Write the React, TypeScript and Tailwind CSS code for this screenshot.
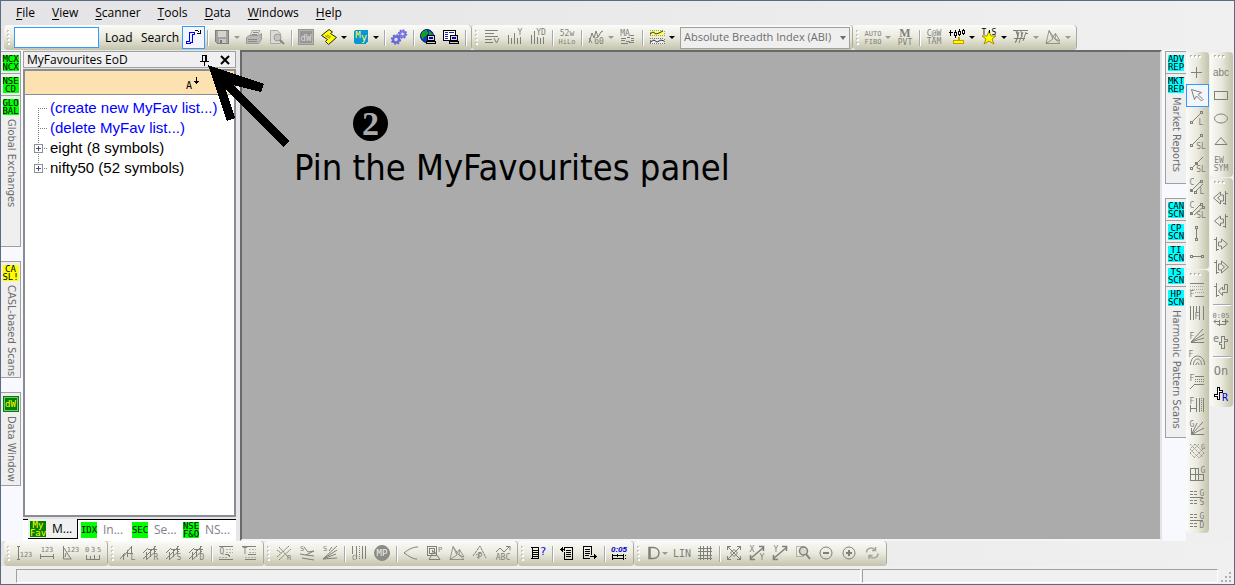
import type { ReactNode } from "react";

type TProps = { x: number; y: number; s?: number; fill?: string; children: ReactNode };

// lettering inside the tool glyphs
function T({ x, y, s = 8, fill = "currentColor", children }: TProps) {
  return (
    <text x={x} y={y} fontSize={s} fill={fill} stroke="none" textAnchor="middle" fontFamily="'DejaVu Sans Mono', monospace">
      {children}
    </text>
  );
}

const pc = (
  <>
    <path d="M7.5 6.5h7v5h-7z" fill="#dcdcdc" stroke="#000" />
    <path d="M9 8h4v2H9z" fill="#0000d0" stroke="none" />
    <path d="M6.5 12.5h9v2h-9z" fill="#c8c8c8" stroke="#000" />
  </>
);

const hatch = <path d="M0 8l5-5M0 14L13 1M3 15l10-9M3.5 7v7M7.5 4v8M11.5 1v8M5 4.5h9" shapeRendering="auto" />;

const icons: Record<string, ReactNode> = {
  follow: (
    <>
      <path d="M4.5 3.5h5v2h-2v8h-2v1h-4v-2h3z" stroke="#0000ff" fill="#e8ecff" />
      <path d="M9.5 1.5h3l2 2M15.5 1v4M12 4.5h4" stroke="#000" />
    </>
  ),
  save: (
    <>
      <path d="M1.5 1.5h13v13h-11l-2-2z" fill="#a2a2a2" />
      <path d="M4 2h8v6H4z" fill="#d4d4cc" stroke="none" />
      <path d="M5 10h7v4H5z" fill="#c8c8c0" stroke="none" />
      <path d="M6 11h2v3H6z" fill="#777" stroke="none" />
    </>
  ),
  print: (
    <g shapeRendering="auto">
      <path d="M6 1.5h8l-3 6H4z" fill="#e2e2dc" stroke="#aaa" />
      <path d="M.5 8.5l3-2h9l3-2v6l-3 4H.5z" fill="#b8b8b4" stroke="#999" />
      <path d="M7 3.5h5M6 5.5h5M2 10.5h9M2 12.5h9" stroke="#8a8a86" />
    </g>
  ),
  preview: (
    <g shapeRendering="auto">
      <path d="M1.5 1.5h7l3 3v10h-10z" fill="#dcdcd6" stroke="#aaa" />
      <circle cx="8.5" cy="8.5" r="3.5" fill="#c6c6c0" stroke="#999" />
      <path d="M11 11l4 4" stroke="#888" strokeWidth="2" />
    </g>
  ),
  dw: (
    <>
      <path d="M0 0h16v16H0z" fill="#969696" stroke="none" />
      <path d="M1.5 1.5h13v13h-13z" stroke="#b4b4ae" />
      <T x={8} y={12} s={9} fill="#dcdcd4">dW</T>
    </>
  ),
  swirl: (
    <g shapeRendering="auto">
      <path d="M8 .5L.5 6.5l6 4-2 2 3 3 8-7-6-4 2-1.500z" fill="#ffff00" stroke="#222" />
      <path d="M4 6.5l5 3M6 6l4 2" stroke="#a09000" />
    </g>
  ),
  my: (
    <>
      <path d="M2 1h13v11l-2 3H2L1 14V2z" fill="#0a96d2" stroke="none" />
      <T x={5} y={9} s={9} fill="#ffff50">M</T>
      <T x={11} y={12} s={10} fill="#ffff50">y</T>
    </>
  ),
  gears: (
    <g shapeRendering="auto">
      <circle cx="5" cy="10.5" r="3" stroke="#6a6ae0" strokeWidth="2.5" />
      <circle cx="5" cy="10.5" r="4.5" stroke="#6060c8" strokeWidth="1.5" strokeDasharray="1.8 1.7" />
      <circle cx="11.500" cy="5" r="2.5" stroke="#7c7cf0" strokeWidth="2.5" />
      <circle cx="11.500" cy="5" r="4" stroke="#6060c8" strokeWidth="1.5" strokeDasharray="1.6 1.5" />
    </g>
  ),
  globe: (
    <>
      <circle cx="7" cy="7" r="6.5" fill="#1038c8" stroke="#002060" shapeRendering="auto" />
      <path d="M3 2l4-1 1 3-3 3-3 3-1-4zM9 2l4 3v2H9z" fill="#10a020" stroke="none" />
      {pc}
    </>
  ),
  listpc: (
    <>
      <path d="M.5 1.5h12v10H.5z" fill="#fff" stroke="#000" />
      <path d="M2 3.5h3M6 3.5h5M2 5.5h3M2 7.5h3M2 9.5h3" stroke="#2020c0" />
      {pc}
    </>
  ),
  linesv: (
    <>
      <path d="M1 1.5h13M1 4.5h9M1 7.5h13M1 10.5h7M1 13.5h8" />
      <path d="M10 9l2.500 5L15 9" shapeRendering="auto" />
    </>
  ),
  barsy: (
    <>
      <path d="M1.5 15V6M4.5 15V9M7.5 15V4M10.5 15V9M13.5 15V8" />
      <T x={13} y={6}>Y</T>
    </>
  ),
  barsyd: (
    <>
      <path d="M1.5 15V6M4.5 15V2M7.5 15V8M10.5 15V9M13.5 15V8" />
      <T x={11} y={6}>YD</T>
    </>
  ),
  hilo: (
    <>
      <T x={8} y={7}>52w</T>
      <T x={8} y={15} s={7}>HiLo</T>
    </>
  ),
  zigzag60: (
    <>
      <path d="M1 14l3-10 2 5 2-7 2 6 3-5 2-1M1 9l3 5" shapeRendering="auto" />
      <T x={11} y={15}>60</T>
    </>
  ),
  ma: (
    <>
      <T x={5} y={7}>MA</T>
      <path d="M10 6.5h4M1 9.5h5M7 8.5h3M11 9.5h3M1 11.5h4M6 12.5h4M11 11.5h3M1 14.5h7M9 13.5h5" />
    </>
  ),
  chart: (
    <>
      <path d="M1 1.5h14v5H1z" fill="#ffff60" stroke="#999" strokeDasharray="1 1" />
      <path d="M1 9.5h14v5H1z" fill="#eee" stroke="#777" strokeDasharray="1 1" />
      <path d="M1 5l3-2 3 2 3-1 4-2M1 13l4-2 3 2 4-2 3 1" stroke="#333" shapeRendering="auto" />
    </>
  ),
  autofibo: (
    <>
      <T x={8} y={7} s={7}>AUTO</T>
      <T x={8} y={15} s={7}>FIBO</T>
    </>
  ),
  mpvt: (
    <>
      <text x="8" y="8" fontSize="12" fontWeight="bold" textAnchor="middle" fill="currentColor" stroke="none" fontFamily="'Liberation Serif', serif">
        M
      </text>
      <T x={8} y={16}>PVT</T>
    </>
  ),
  cowtam: (
    <>
      <T x={8} y={7}>C@W</T>
      <T x={8} y={15}>TAM</T>
    </>
  ),
  candles: (
    <>
      <path d="M1.5 1v6M0 3.5h4M6.5 1v8M10.5 0v7M14.5 0v6" stroke="#000" />
      <path d="M5.5 3.5h2v3h-2zM9.5 2.5h2v3h-2zM13.5 1.5h2v3h-2z" fill="#fff" stroke="#000" />
      <path d="M9.500 8.500h1v3h4v3h-10v-3h5z" fill="#ffff00" stroke="#c0a000" />
    </>
  ),
  tas: (
    <>
      <path d="M8 2l2 5h5l-4 3 2 5-5-3-5 3 2-5-4-3h5z" fill="#ffff00" stroke="#a09000" shapeRendering="auto" />
      <T x={3} y={6} fill="#000">T</T>
      <T x={13} y={6} fill="#000">S</T>
      <path d="M8.5 1v3" stroke="#000" />
    </>
  ),
  channels: <path d="M0 1.5h15M13 4.5h2M3 2l2 6-3 6M6 3L3 13M10 3L6 14M13 3l-3 9M1 9.5h11M4 2l1 5M8 2l1 6" shapeRendering="auto" />,
  tri: <path d="M1 14.5L4 1.500l6 8.500 5 4.500zM4 1.500L8 10l-7 4.500M10.500 4.500L15 12l-5-2zM10.500 4.500L7 9" strokeWidth=".8" shapeRendering="auto" />,

  i123: (
    <>
      <path d="M1 1.5h3M2.5 1v13M1 14.5h3" />
      <T x={10} y={12} s={7}>123</T>
    </>
  ),
  w123: (
    <>
      <T x={8} y={7} s={7}>123</T>
      <path d="M1.5 9v5M14.5 9v5M1 11.5h14" />
    </>
  ),
  v123: (
    <>
      <path d="M1.5 1v13h8M2 3l7 11M4 8l-1 4" shapeRendering="auto" />
      <T x={11} y={7} s={7}>123</T>
    </>
  ),
  ruler: (
    <>
      <T x={2} y={7} s={7}>0</T>
      <T x={8} y={7} s={7}>3</T>
      <T x={14} y={7} s={7}>5</T>
      <path d="M1.5 10v4M5.5 11v3M9.5 10v4M14.5 10v4M1 14.5h14" />
    </>
  ),
  hatchL: (
    <>
      <path d="M0 14l5-6M3.5 15V9M3 12l9-11M7.5 12V5M11.5 9V1M8 8.5h5" shapeRendering="auto" />
      <T x={13} y={15}>L</T>
    </>
  ),
  hatchR: (
    <>
      {hatch}
      <T x={13} y={15}>R</T>
    </>
  ),
  hatchS: (
    <>
      {hatch}
      <T x={13} y={15}>S</T>
    </>
  ),
  hatchD: (
    <>
      {hatch}
      <T x={13} y={15}>D</T>
    </>
  ),
  quad: (
    <>
      <T x={4} y={9}>Q</T>
      <path d="M1 1.5h14M7 9.5h3l2 2M1 14.5h14" />
      <path d="M8 4.5h7M8 7.5h7M1 12.5h9" strokeDasharray="2 1" stroke="#b0b0a8" />
    </>
  ),
  tline: (
    <>
      <T x={4} y={9}>T</T>
      <path d="M1 1.5h14M7 9.5h8M4 14.5h11" />
      <path d="M8 4.5h7M8 7.5h7M4 12.5h11" strokeDasharray="2 1" stroke="#b0b0a8" />
    </>
  ),
  crossA: (
    <>
      <path d="M1 12L13 1M3 15L15 4M3 2l9 10M1 5l4 3" strokeDasharray="2 .5" shapeRendering="auto" />
      <T x={13} y={15} s={7}>R</T>
    </>
  ),
  fanS1: (
    <>
      <T x={3} y={6} s={7}>S</T>
      <path d="M5 2l4 5 6-1M1 9l6 1 8-4M3 13l6 1 6 1M7 10l8 1" shapeRendering="auto" />
    </>
  ),
  fanS2: (
    <>
      <T x={3} y={6} s={7}>S</T>
      <path d="M1 14L15 1M1 14L15 5M1 14l13-5M1 14l14-1M7 6l3-4" shapeRendering="auto" />
    </>
  ),
  barsC: (
    <>
      <path d="M1.5 1v8M5.5 1v13M11.5 1v13M14.5 1v13" />
      <path d="M8.5 1v13" strokeDasharray="1 1" />
      <T x={3} y={15} s={7}>C</T>
    </>
  ),
  mp: (
    <>
      <circle cx="8" cy="8" r="7.5" fill="#8c8c86" stroke="#8c8c86" shapeRendering="auto" />
      <T x={8} y={11} s={9} fill="#f0f0e8">MP</T>
    </>
  ),
  curve: <path d="M15 2C10 2 6 4 1 8c5 3 8 6 13 6" shapeRendering="auto" />,
  spiral: (
    <>
      <path d="M1.5 1.5h9v9h-9zM3.5 3.5h5v5h-5zM5.5 5.5h1v1" />
      <path d="M3 14.5h11L8 6z" shapeRendering="auto" />
      <T x={14} y={7} s={7}>P</T>
    </>
  ),
  tent: (
    <>
      <path d="M1 11L8 1l6 12M9 8l-5 2M5 13l3-3" strokeDasharray="3 .5" shapeRendering="auto" />
      <T x={8} y={14}>P</T>
    </>
  ),
  abc: (
    <>
      <path d="M1 7l4-4 4 4 5-5M11 1.5h4v4" shapeRendering="auto" />
      <T x={8} y={15}>ABC</T>
    </>
  ),
  docq: (
    <>
      <path d="M1 2.5h8M2.5 2v12M8.5 2v12M1 13.5h8" stroke="#000" />
      <path d="M3 5.5h5M3 7.5h5M3 9.5h5M3 11.5h5" stroke="#000" />
      <T x={13} y={10} s={11} fill="#0000e0">?</T>
    </>
  ),
  docin: (
    <>
      <path d="M5.5 5.5v-3h8v12h-8V7M7 5.5h5M7 7.5h5M7 9.5h5M7 11.5h5M1 4.5h5M2.5 3v3M3.500 2v5" stroke="#000" />
    </>
  ),
  docout: (
    <>
      <path d="M9.5 10V1.5h-8v12h6M3 4.5h5M3 6.5h5M3 8.5h5M3 10.5h4M8 11.5h7M13.5 10v3M12.5 9v5" stroke="#000" />
    </>
  ),
  replay: (
    <>
      <text x="8" y="7" fontSize="8" fontStyle="italic" fontWeight="bold" textAnchor="middle" fill="#0000d0" stroke="none" fontFamily="'Liberation Sans', sans-serif">
        0:05
      </text>
      <path d="M1.5 9v6M1 10.5h12M1 13.5h12M12.5 9v6M14.5 10v1M6.5 9v3M14 13.5h1" stroke="#000" />
    </>
  ),
  bigD: <path d="M3 2.5h4c8 0 8 11 0 11H3zM4 2v12" strokeWidth="1.500" shapeRendering="auto" />,
  lin: <T x={8} y={12} s={10}>LIN</T>,
  grid: <path d="M3.5 1v14M6.5 1v14M10.5 1v14M13.5 1v14M1 3.5h14M1 6.5h14M1 10.5h14M1 13.5h14" />,
  fitall: (
    <>
      <path d="M1.5 5V1.500h3.500M11 1.500h3.500V5M14.500 11v3.500H11M5 14.500H1.500V11" />
      <path d="M2 2l12 12M14 2L2 14M8 4.500L11.500 8 8 11.500 4.500 8z" shapeRendering="auto" />
    </>
  ),
  fitxy: (
    <>
      <path d="M1 14L15 2M10 1.5h4.500V6M1.500 10v4.500H6" strokeWidth="1.500" shapeRendering="auto" />
      <T x={3} y={7}>X</T>
      <T x={13} y={15}>Y</T>
    </>
  ),
  fity: (
    <>
      <path d="M1 14L15 2M10 1.5h4.500V6M1.500 10v4.500H6" strokeWidth="1.500" shapeRendering="auto" />
      <T x={4} y={7}>Y</T>
    </>
  ),
  lens: (
    <g shapeRendering="auto">
      <path d="M1.5 1.5h7v10h-7z" strokeDasharray="1 1" />
      <circle cx="8.5" cy="6" r="4" fill="#d8d8cc" strokeWidth="1.5" />
      <path d="M11 9l4 5" strokeWidth="2" />
    </g>
  ),
  minus: (
    <g shapeRendering="auto">
      <circle cx="8" cy="8" r="6" />
      <path d="M5 8h6" strokeWidth="2" />
    </g>
  ),
  plus: (
    <g shapeRendering="auto">
      <circle cx="8" cy="8" r="6" />
      <path d="M5 8h6M8 5v6" strokeWidth="2" />
    </g>
  ),
  refresh: <path d="M2.500 7.500c0-4 5-6 8-3M8 5.500h3.500V2M14 8.500c0 4-5 6-8 3M8.500 10.500H5V14" strokeWidth="1.500" stroke="#a5a59c" shapeRendering="auto" />,

  cross: <path d="M7.5 3v11M2 8.5h11" />,
  pointer: <path d="M2.5 2.5l3 10 2-3.500 5 5 1.500-1.500-5-5 3.500-2z" shapeRendering="auto" />,
  lineL: (
    <>
      <path d="M3 12L12 3" shapeRendering="auto" />
      <path d="M1.5 11.5h2v2h-2zM11.5 1.5h2v2h-2z" />
      <T x={12} y={15}>L</T>
    </>
  ),
  lineSL: (
    <>
      <path d="M3 12L12 3" shapeRendering="auto" />
      <path d="M1.5 11.5h2v2h-2zM11.5 1.5h2v2h-2z" />
      <T x={12} y={16}>SL</T>
    </>
  ),
  raySL: (
    <>
      <path d="M3 12L14 1" shapeRendering="auto" />
      <path d="M1.5 11.5h2v2h-2zM6.5 6.5h2v2h-2z" />
      <T x={12} y={16}>SL</T>
    </>
  ),
  chanL: (
    <>
      <T x={3} y={6}>C</T>
      <path d="M2 12L12 2M6 13l8-8" shapeRendering="auto" />
      <path d="M1.5 10.5h2v2h-2zM11.5 1.5h2v2h-2zM5.5 12.5h2v2h-2z" />
      <T x={13} y={15}>L</T>
    </>
  ),
  chanSL: (
    <>
      <T x={3} y={6}>C</T>
      <path d="M2 12L12 2M5 13l9-8" shapeRendering="auto" />
      <path d="M1.5 10.5h2v2h-2zM11.5 1.5h2v2h-2zM13.5 4.5h2v2h-2z" />
      <T x={12} y={16}>SL</T>
    </>
  ),
  vline: <path d="M7.5 4v9M6.500 1.500h2v2h-2zM6.500 13.500h2v2h-2z" />,
  hline: <path d="M4 8.5h8M1.5 7.500h2v2h-2zM12.5 7.500h2v2h-2z" />,
  retrace: (
    <>
      <path d="M1 1.5h14M6 14.5h9" />
      <path d="M1 4.5h14M1 7.5h14M6 10.5h9" strokeDasharray="1 1" stroke="#a8a8a0" />
      <T x={3} y={15}>F</T>
    </>
  ),
  fbars: (
    <>
      <path d="M1.5 1v14M4.5 1v14M7.500 1v6M10.5 1v14M14.5 1v14" />
      <T x={8} y={14}>F</T>
    </>
  ),
  ffan: (
    <>
      <path d="M2 14L14 1M2 14L15 6M2 14l13-4M2 14.5h13" shapeRendering="auto" />
      <T x={3} y={11}>F</T>
    </>
  ),
  farc: (
    <>
      <path d="M1.5 14c0-12 14-12 14 0M4.5 14c0-8 8-8 8 0M7 14c0-3 3-3 3 0" shapeRendering="auto" />
      <T x={2} y={6}>F</T>
    </>
  ),
  fext: (
    <>
      <T x={3} y={7}>F</T>
      <path d="M6 2.5h9M6 10.5h9" />
      <path d="M1 15l5-5" shapeRendering="auto" />
      <path d="M6 5.5h9M6 7.5h9" strokeDasharray="1 1" />
    </>
  ),
  fvert: (
    <>
      <T x={3} y={7}>F</T>
      <path d="M1.5 8v7M1 11.5h6M7.5 1v14M10.5 1v14M14.5 1v14" />
      <path d="M12.5 1v14" strokeDasharray="1 1" />
    </>
  ),
  gfan: (
    <>
      <T x={3} y={7}>G</T>
      <path d="M2.5 8v6.500H15M2.5 14.5L8 3M2.5 14.5L14 2M2.5 14.5L15 8" shapeRendering="auto" />
    </>
  ),
  gcross: (
    <>
      <path d="M1 1l13 13M6 1l9 9M1 6l9 9M1 10l5 5M10 1L1 10M14 6l-9 9M6 1L1 6M15 10l-5 5" strokeDasharray="1.500 .700" strokeWidth=".8" shapeRendering="auto" />
      <T x={14} y={6} s={7}>G</T>
    </>
  ),
  gsquare: (
    <>
      <path d="M1.5 2.500h8M1.500 2v12.500h13V8M1 8.500h13M6.500 2v12M9.500 2v12" />
      <T x={14} y={7}>G</T>
    </>
  ),
  gs: (
    <>
      <path d="M1 2.5h8M1 5.5h8M1 11.5h8M1 14.5h8" strokeDasharray="3 1" />
      <path d="M1 8.5h13" />
      <T x={13} y={7}>G</T>
      <T x={13} y={16}>S</T>
    </>
  ),
  gd: (
    <>
      <path d="M1 2.5h8M1 5.5h8M1 11.5h8M1 14.5h8" strokeDasharray="3 1" />
      <path d="M1 8.5h13" />
      <T x={13} y={7}>G</T>
      <T x={13} y={16}>D</T>
    </>
  ),

  text: (
    <text x="8" y="12" fontSize="10" textAnchor="middle" fill="currentColor" stroke="none" fontFamily="'Liberation Sans', sans-serif">
      abc
    </text>
  ),
  rect: <path d="M1.5 4.5h13v8h-13z" />,
  oval: <ellipse cx="8" cy="8.5" rx="6.5" ry="4.5" shapeRendering="auto" />,
  triangle: <path d="M8 4.5l6 7H2z" shapeRendering="auto" />,
  ewsym: (
    <>
      <T x={6} y={7}>EW</T>
      <T x={8} y={15}>SYM</T>
    </>
  ),
  backAll: <path d="M7.500 2L.500 8l7 6v-3h3V5h-3zM7.500 5.500L4.500 8l3 2.500M12.500 1v14M12 3.500h3M10 13.500h2" shapeRendering="auto" />,
  back: <path d="M7.500 3l-6 5 6 5v-3h3V6h-3zM12.500 1v14M12 3.500h3M10 13.500h2" shapeRendering="auto" />,
  fwd: <path d="M3.500 1v14M1 3.500h2M3 13.500h3M8.500 3l6 5-6 5v-3h-3V6h3z" shapeRendering="auto" />,
  fwdAll: <path d="M3.500 1v14M1 3.500h2M3 13.500h3M8.500 2l7 6-7 6v-3h-3V5h3zM8.500 5.500l3 2.500-3 2.500" shapeRendering="auto" />,
  ret: <path d="M3.500 1v14M1 4.500h2M3 13.500h3M11.500 2.500h3v8h-5v3L5.500 9l4-4v2.500h2z" shapeRendering="auto" />,
  time: (
    <>
      <T x={8} y={7} s={7}>0:05</T>
      <path d="M1 10.5h5M6.500 9v6M4 13.5h8M12.500 8v6M15 10.5H9M3 8.500l-2 2 2 2M13 8.500l2 2-2 2" shapeRendering="auto" />
    </>
  ),
  ebar: (
    <>
      <T x={3} y={8} s={10}>e</T>
      <path d="M8.5 14.5v-4h-2v-2h2v-6h3v3h3v2h-3v7z" />
    </>
  ),
  on: <T x={8} y={12} s={12}>On</T>,
  barR: (
    <>
      <path d="M4.5 13.5v-3h-3v-2h3v-7h2v3h3v2h-3v7z" stroke="#000" fill="#fff" />
      <T x={12} y={15} s={10} fill="#0000d0">R</T>
    </>
  ),
};

type ToolProps = { name: string; active?: boolean; narrow?: boolean };

function Tool({ name, active = false, narrow = false }: ToolProps) {
  return (
    <button
      type="button"
      aria-label={name}
      className={`flex h-[23px] shrink-0 items-start text-[#80807a] ${narrow ? "w-[19px]" : "w-[23px]"} ${
        active ? "border border-[#3399ff] bg-[#f2f5fa] pt-[2px] pl-[2px]" : "pt-[3px] pl-[3px]"
      }`}
    >
      <svg width="16" height="16" viewBox="0 0 16 16" fill="none" stroke="currentColor" shapeRendering="crispEdges" className="shrink-0 overflow-visible">
        {icons[name]}
      </svg>
    </button>
  );
}

function Caret({ on = false }: { on?: boolean }) {
  return (
    <button type="button" aria-label="More" className="flex h-[23px] w-[9px] shrink-0 items-center">
      <span className={`border-x-[3px] border-t-[3px] border-x-transparent ${on ? "border-t-black" : "border-t-[#9a9a94]"}`} />
    </button>
  );
}

function Sep({ flat = false }: { flat?: boolean }) {
  return flat ? (
    <span className="flex h-[6px] items-center justify-center">
      <span className="h-[2px] w-[18px] border-t border-[#a8a8b0] bg-white" />
    </span>
  ) : (
    <span className="flex w-[6px] shrink-0 items-center justify-center">
      <span className="h-[16px] w-[2px] border-l border-[#a8a8b0] bg-white" />
    </span>
  );
}

// "|" is a separator, ">" a disabled drop arrow, "v" an enabled one
function items(list: string[], flat = false) {
  return list.map((n, i) => {
    if (n === "|") return <Sep key={i} flat={flat} />;
    if (n === ">") return <Caret key={i} />;
    if (n === "v") return <Caret key={i} on />;
    return <Tool key={i} name={n} active={n === "follow" || n === "pointer"} narrow={n === "bigD"} />;
  });
}

function HBar({ children }: { children: ReactNode }) {
  return (
    <div className="mr-px flex h-[25px] shrink-0 items-center rounded-[4px] bg-linear-to-b from-[#fbfbf8] via-[#e9e9de] to-[#c4c3ab] pr-[2px] shadow-[1px_0_0_#a9a99c]">
      <span className="flex w-[9px] shrink-0 flex-col items-center gap-[2px]">
        {[0, 1, 2, 3].map((i) => (
          <span key={i} className="size-[2px] bg-white shadow-[-1px_-1px_0_#c4c4bc]" />
        ))}
      </span>
      {children}
    </div>
  );
}

function VBar({ list }: { list: string[] }) {
  return (
    <div className="mb-px flex flex-col items-center rounded-[4px] bg-linear-to-r from-[#fbfbf8] via-[#e9e9de] to-[#c4c3ab] pb-px">
      <span className="flex h-[9px] items-center gap-[2px] self-start pl-[5px]">
        {[0, 1, 2].map((i) => (
          <span key={i} className="size-[2px] bg-white shadow-[-1px_-1px_0_#b4b4ac]" />
        ))}
      </span>
      {items(list, true)}
    </div>
  );
}

const badgeColors = {
  green: "bg-[#00ff00] text-black",
  cyan: "bg-[#00ffff] text-black",
  yellow: "bg-[#ffff00] text-black",
  dark: "bg-[#008000] text-[#ffff00]",
};

type BadgeProps = { lines: string[]; color: keyof typeof badgeColors; boxed?: boolean };

function Badge({ lines, color, boxed = false }: BadgeProps) {
  return (
    <span
      className={`flex size-[16px] shrink-0 flex-col items-center justify-center font-['DejaVu_Sans_Mono',monospace] text-[9px] leading-[8px] [writing-mode:horizontal-tb] ${
        badgeColors[color]
      } ${boxed ? "outline-1 -outline-offset-2 outline-[#7fbf7f]" : ""}`}
    >
      {lines.map((l) => (
        <span key={l}>{l}</span>
      ))}
    </span>
  );
}

type SideTabProps = BadgeProps & { label?: string; size: string; side?: "left" | "right" };

function SideTab({ label, size, side = "left", ...badge }: SideTabProps) {
  return (
    <button
      type="button"
      aria-label={label ?? badge.lines.join(" ")}
      className={`flex w-full flex-col items-center gap-[4px] border-t border-[#a0a0a0] bg-[#efefef] pt-[3px] last:border-b ${
        side === "left" ? "border-r" : "border-l"
      } ${size}`}
    >
      <Badge {...badge} />
      {label && (
        <span className="font-['DejaVu_Sans_Condensed','DejaVu_Sans',sans-serif] text-[11px] leading-[16px] whitespace-nowrap text-[#6b6b6b] [writing-mode:vertical-rl]">
          {label}
        </span>
      )}
    </button>
  );
}

const menus = ["File", "View", "Scanner", "Tools", "Data", "Windows", "Help"];

type RowProps = { label: string; kind: "link" | "node"; first?: boolean; last?: boolean };

function TreeRow({ label, kind, first = false, last = false }: RowProps) {
  return (
    <li className="flex h-[20px] items-center">
      <svg width="16" height="20" fill="none" stroke="#808080" shapeRendering="crispEdges">
        <path d={`M4.5 ${first ? 10 : 0}V${last ? 10 : 20}M4 10.5h9`} strokeDasharray="1 1" />
        {kind === "node" && (
          <>
            <path d="M.5 6.5h8v8h-8z" fill="#fff" stroke="#8f8f8f" />
            <path d="M2 10.5h5M4.5 8v5" stroke="#3b4f8f" />
          </>
        )}
      </svg>
      <button type="button" className={kind === "link" ? "text-[#0000ff]" : "text-black"}>
        {label}
      </button>
    </li>
  );
}

function Panel() {
  const tabs = [
    { lines: ["IDX"], label: "In..." },
    { lines: ["SEC"], label: "Se..." },
    { lines: ["NSE", "F&O"], label: "NS..." },
  ];
  return (
    <section className="flex w-[213px] shrink-0 flex-col pt-px">
      <header className="flex h-[17px] items-center border border-[#a0a0a0] bg-[#f0f0f0] pr-[5px] pl-[3px] text-[12px] leading-[15px]">
        <h2 className="flex-1">MyFavourites EoD</h2>
        <button type="button" aria-label="Pin" className="mr-[11px]">
          <svg width="9" height="12" fill="none" stroke="#000" shapeRendering="crispEdges">
            <path d="M2.5 1v6M2 1.5h5M5.5 1v6M6.5 1v6M0 7.5h9M4.5 8v4" />
          </svg>
        </button>
        <button type="button" aria-label="Close">
          <svg width="10" height="10" stroke="#000" strokeWidth="2">
            <path d="M1 1l8 8M9 1L1 9" />
          </svg>
        </button>
      </header>
      <div className="mt-px flex flex-1 flex-col border-2 border-[#8c8c94] bg-white">
        <div className="flex h-[24px] items-center justify-end border-b border-[#8c8c94] bg-[#fce2b0] pr-[34px]">
          <button type="button" aria-label="Sort">
            <svg width="14" height="14" fill="none" stroke="#000" shapeRendering="crispEdges">
              <text x="0" y="13" fontSize="10" fill="#000" stroke="none" fontFamily="'DejaVu Sans Mono', monospace">
                A
              </text>
              <path d="M10.5 1v7M8 5.5h5M9 6.5h3" />
            </svg>
          </button>
        </div>
        <ul className="pt-[3px] pl-[9px] font-['Liberation_Sans',Arial,sans-serif] text-[15px] leading-[20px]">
          <TreeRow label="(create new MyFav list...)" kind="link" first />
          <TreeRow label="(delete MyFav list...)" kind="link" />
          <TreeRow label="eight (8 symbols)" kind="node" />
          <TreeRow label="nifty50 (52 symbols)" kind="node" last />
        </ul>
      </div>
      <div className="mt-[2px] flex h-[22px] bg-white text-[12px] text-[#808088]">
        <span className="w-[5px] border-t border-black" />
        <button type="button" className="flex h-[20px] w-[50px] items-center gap-[6px] border-r border-b border-black bg-[#f0f0f0] pl-[2px] text-black">
          <Badge lines={["My", "Fav"]} color="dark" />
          M...
        </button>
        <div className="flex flex-1 border-t border-black">
          {tabs.map((t) => (
            <button type="button" key={t.label} className="flex h-[19px] w-[51px] items-center gap-[6px] pl-[3px]">
              <Badge lines={t.lines} color="green" />
              <span className="flex-1 text-left">{t.label}</span>
              <span className="h-[14px] w-px bg-[#808080]" />
            </button>
          ))}
        </div>
      </div>
    </section>
  );
}

export default function App() {
  return (
    <div className="relative flex min-h-screen flex-col overflow-hidden border border-[#5a6a80] bg-linear-to-r from-[#e4e4e6] to-[#f0f0f0] font-['Open_Sans','Noto_Sans',sans-serif] text-[12px] text-black">
      <nav className="flex h-[24px] items-center gap-[17px] pl-[15px]">
        {menus.map((m) => (
          <button type="button" key={m}>
            <span className="underline underline-offset-2">{m[0]}</span>
            {m.slice(1)}
          </button>
        ))}
      </nav>

      <div className="flex h-[25px] pl-[3px]">
        <HBar>
          <input aria-label="Symbol" className="mr-[6px] ml-px h-[21px] w-[85px] border border-[#3399ff] bg-white px-1 outline-none" />
          <button type="button" className="w-[27px] text-center whitespace-nowrap">Load</button>
          <button type="button" className="mr-[4px] ml-[9px] w-[37px] text-center whitespace-nowrap">Search</button>
          {items(["follow", "|", "save", ">", "print", "preview", "|", "dw", "swirl", "v", "my", "v", "|", "gears", "|", "globe", "listpc", "|"])}
        </HBar>
        <HBar>
          {items(["linesv", "barsy", "barsyd", "|", "hilo", "|", "zigzag60", ">", "ma", "|", "chart", "v"])}
          <span className="relative ml-[2px] flex">
            <select
              aria-label="Indicator"
              className="h-[22px] w-[170px] appearance-none border border-[#a0a0a0] bg-[#efefef] pr-[15px] pl-[3px] text-[11px] text-[#6d6d6d]"
            >
              <option>Absolute Breadth Index (ABI)</option>
            </select>
            <span className="pointer-events-none absolute top-[9px] right-[4px] border-x-[3px] border-t-[4px] border-x-transparent border-t-[#6d6d6d]" />
          </span>
        </HBar>
        <HBar>
          {items(["autofibo", ">", "mpvt", "|", "cowtam", "candles", "v", "tas", "v", "channels", ">", "tri", ">"])}
        </HBar>
      </div>

      <main className="flex flex-1">
        <aside className="flex w-[20px] shrink-0 flex-col gap-[14px] bg-[#f8f9fe] pt-px">
          <div>
            <SideTab lines={["MCX", "NCX"]} color="green" size="h-[22px]" />
            <SideTab lines={["NSE", "CD"]} color="green" size="h-[22px]" />
            <SideTab lines={["GLO", "BAL"]} color="green" label="Global Exchanges" size="h-[152px]" />
          </div>
          <div>
            <SideTab lines={["CA", "SL!"]} color="yellow" label="CASL-based Scans" size="h-[117px]" />
          </div>
          <div>
            <SideTab lines={["dW"]} color="dark" boxed label="Data Window" size="h-[94px]" />
          </div>
        </aside>
        <div className="w-[2px] shrink-0 bg-[#f8f9fe]" />
        <Panel />
        <div className="ml-[4px] flex-1 border-2 border-t-[#696969] border-r-[#e3e3e3] border-b-[#f4f4f4] border-l-[#696969] bg-[#ababab]" />
        <aside className="flex w-[24px] shrink-0 flex-col gap-[14px] bg-[#f8f9fe] pt-px pl-[3px]">
          <div>
            <SideTab side="right" lines={["ADV", "REP"]} color="cyan" size="h-[22px]" />
            <SideTab side="right" lines={["MKT", "REP"]} color="cyan" label="Market Reports" size="h-[111px]" />
          </div>
          <div>
            <SideTab side="right" lines={["CAN", "SCN"]} color="cyan" size="h-[22px]" />
            <SideTab side="right" lines={["CP", "SCN"]} color="cyan" size="h-[22px]" />
            <SideTab side="right" lines={["TI", "SCN"]} color="cyan" size="h-[22px]" />
            <SideTab side="right" lines={["TS", "SCN"]} color="cyan" size="h-[22px]" />
            <SideTab side="right" lines={["HP", "SCN"]} color="cyan" label="Harmonic Pattern Scans" size="h-[152px]" />
          </div>
        </aside>
        <div className="flex w-[48px] shrink-0 gap-px bg-[#efefef] pt-[2px]">
          <div className="w-[23px]">
            <VBar list={["cross", "pointer", "lineL", "lineSL", "raySL", "chanL", "chanSL", "vline", "hline"]} />
            <VBar list={["retrace", "fbars", "ffan", "farc", "fext", "fvert", "gfan", "gcross", "gsquare", "gs", "gd"]} />
          </div>
          <div className="w-[23px]">
            <VBar list={["text", "rect", "oval", "triangle", "ewsym"]} />
            <VBar list={["backAll", "back", "fwd", "fwdAll", "ret", "|", "time", "ebar", "|", "on", "barR"]} />
          </div>
        </div>
      </main>

      <div className="flex h-[25px] pl-[3px]">
        <HBar>{items(["i123", "w123", "v123", "ruler"])}</HBar>
        <HBar>{items(["hatchL", "hatchR", "hatchS", "hatchD", "|", "quad", "tline"])}</HBar>
        <HBar>{items(["crossA", "fanS1", "fanS2", "|", "barsC", "mp", "|", "curve", "spiral", "tri", "tent", "abc"])}</HBar>
        <HBar>{items(["docq", "|", "docin", "docout", "|", "replay"])}</HBar>
        <HBar>{items(["bigD", ">", "lin", "grid", "|", "fitall", "fitxy", "fity", "lens", "minus", "plus", "refresh"])}</HBar>
      </div>

      <footer className="flex h-[18px] items-start gap-px bg-[#f0f0f0] pt-[3px] pl-[15px]">
        <div className="h-[14px] w-[845px] border border-t-[#a0a0a0] border-r-white border-b-white border-l-[#a0a0a0]" />
        <div className="h-[14px] flex-1 border border-t-[#a0a0a0] border-r-white border-b-white border-l-[#a0a0a0]" />
        <svg width="15" height="14" fill="#b0b0b0" className="shrink-0">
          <path d="M10 3h2v2h-2zM6 7h2v2H6zM10 7h2v2h-2zM2 11h2v2H2zM6 11h2v2H6zM10 11h2v2h-2z" />
        </svg>
      </footer>

      {/* callout drawn over the window */}
      <svg width="90" height="90" viewBox="205 62 90 90" className="pointer-events-none absolute top-[61px] left-[204px]" shapeRendering="crispEdges">
        <path d="M208 65l56 19-3 8-28-7 57 56-7 6-57-57 9 28-8 3z" />
      </svg>
      <div className="pointer-events-none absolute top-[105px] left-[293px]">
        <span className="ml-[59px] flex size-[35px] items-center justify-center rounded-full bg-black font-['Liberation_Serif',serif] text-[34px] leading-[35px] font-bold text-[#ababab]">
          2
        </span>
        <p className="font-['DejaVu_Sans_Condensed','DejaVu_Sans',sans-serif] text-[36px] leading-[54px] whitespace-nowrap">
          Pin the MyFavourites panel
        </p>
      </div>
    </div>
  );
}
